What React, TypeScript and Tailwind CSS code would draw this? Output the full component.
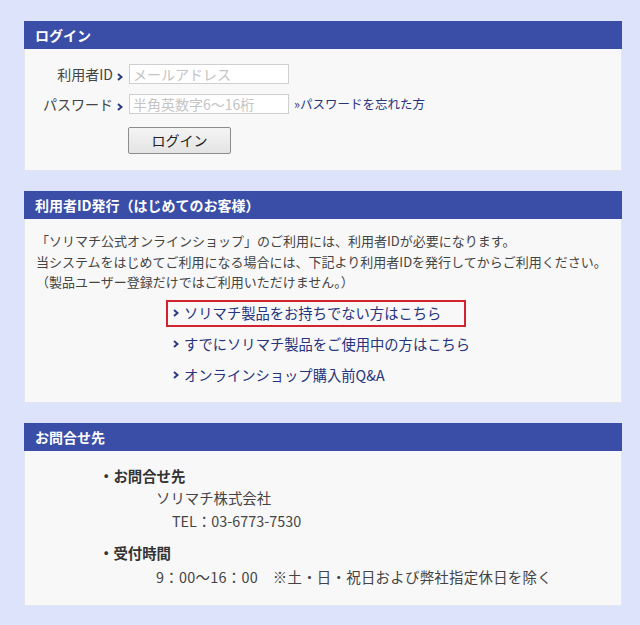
import React from 'react'

const font = { fontFamily: '"Noto Sans CJK JP", "Noto Sans", sans-serif' }

function Arrow() {
  return (
    <svg width="6" height="8" viewBox="0 0 6 8" className="inline-block shrink-0">
      <path d="M1 1 L4.5 4 L1 7" fill="none" stroke="#2c3a80" strokeWidth="2" />
    </svg>
  )
}

function Panel({ title, children }: { title: string; children: React.ReactNode }) {
  return (
    <section className="w-[598px]">
      <h2 className="h-[28px] bg-[#3a4ea8] text-white text-[14px] font-bold leading-[28px] px-[11px]">
        {title}
      </h2>
      <div className="bg-[#f8f8f8] border-x border-b border-[#e4e6ee]">{children}</div>
    </section>
  )
}

export default function App() {
  return (
    <div style={font} className="min-h-[625px] bg-[#dce3fa] pt-[21px] pl-[24px] flex flex-col gap-[20px] text-[#333]">
      {/* Login */}
      <Panel title="ログイン">
        <div className="pt-[15px] pb-[16px]">
          <div className="flex items-center h-[20px]">
            <span className="w-[88px] text-right text-[14px] text-[#444]">利用者ID</span>
            <span className="ml-[4px] mr-[6px]"><Arrow /></span>
            <div className="w-[160px] h-[20px] border border-[#cfcfcf] bg-white text-[14px] leading-[18px] pl-[3px] text-[#c4c4c4]">
              メールアドレス
            </div>
          </div>
          <div className="flex items-center h-[20px] mt-[10px]">
            <span className="w-[88px] text-right text-[14px] text-[#444]">パスワード</span>
            <span className="ml-[4px] mr-[6px]"><Arrow /></span>
            <div className="w-[160px] h-[20px] border border-[#cfcfcf] bg-white text-[14px] leading-[18px] pl-[3px] text-[#c4c4c4]">
              半角英数字6～16桁
            </div>
            <a className="ml-[5px] text-[12.5px] text-[#26337d]">»パスワードを忘れた方</a>
          </div>
          <button className="ml-[103px] mt-[13px] w-[103px] h-[27px] rounded-[2px] border border-[#8c8c8c] bg-gradient-to-b from-[#f4f4f4] to-[#e4e4e4] text-[14px] text-[#222]">
            ログイン
          </button>
        </div>
      </Panel>

      {/* Registration */}
      <Panel title="利用者ID発行（はじめてのお客様）">
        <div className="pt-[12px] pb-[13px]">
          <div className="px-[11px] text-[13px] leading-[20.5px] text-[#444] whitespace-nowrap">
            <p>「ソリマチ公式オンラインショップ」のご利用には、利用者IDが必要になります。</p>
            <p>当システムをはじめてご利用になる場合には、下記より利用者IDを発行してからご利用ください。</p>
            <p>（製品ユーザー登録だけではご利用いただけません。）</p>
          </div>
          <ul className="mt-[7px] pl-[141px] text-[14.3px] text-[#26337d] flex flex-col gap-[4px]">
            <li className="w-[300px] h-[27px] border-2 border-[#d2232e] flex items-center gap-[5px] pl-[5px]">
              <Arrow />
              <span>ソリマチ製品をお持ちでない方はこちら</span>
            </li>
            <li className="h-[27px] flex items-center gap-[5px] pl-[7px]">
              <Arrow />
              <span>すでにソリマチ製品をご使用中の方はこちら</span>
            </li>
            <li className="h-[27px] flex items-center gap-[5px] pl-[7px]">
              <Arrow />
              <span>オンラインショップ購入前Q&amp;A</span>
            </li>
          </ul>
        </div>
      </Panel>

      {/* Contact */}
      <Panel title="お問合せ先">
        <div className="pt-[14px] pb-[17px] pl-[74px] text-[14.4px] text-[#444]">
          <p className="font-bold text-[#333] leading-[22px]">・お問合せ先</p>
          <p className="pl-[57px] leading-[22px]">ソリマチ株式会社</p>
          <p className="pl-[73px] leading-[22px] mt-[1px]">TEL：03-6773-7530</p>
          <p className="font-bold text-[#333] leading-[22px] mt-[10px]">・受付時間</p>
          <p className="pl-[57px] leading-[22px] mt-[2px] tracking-[0.3px]">9：00～16：00　※土・日・祝日および弊社指定休日を除く</p>
        </div>
      </Panel>
    </div>
  )
}
